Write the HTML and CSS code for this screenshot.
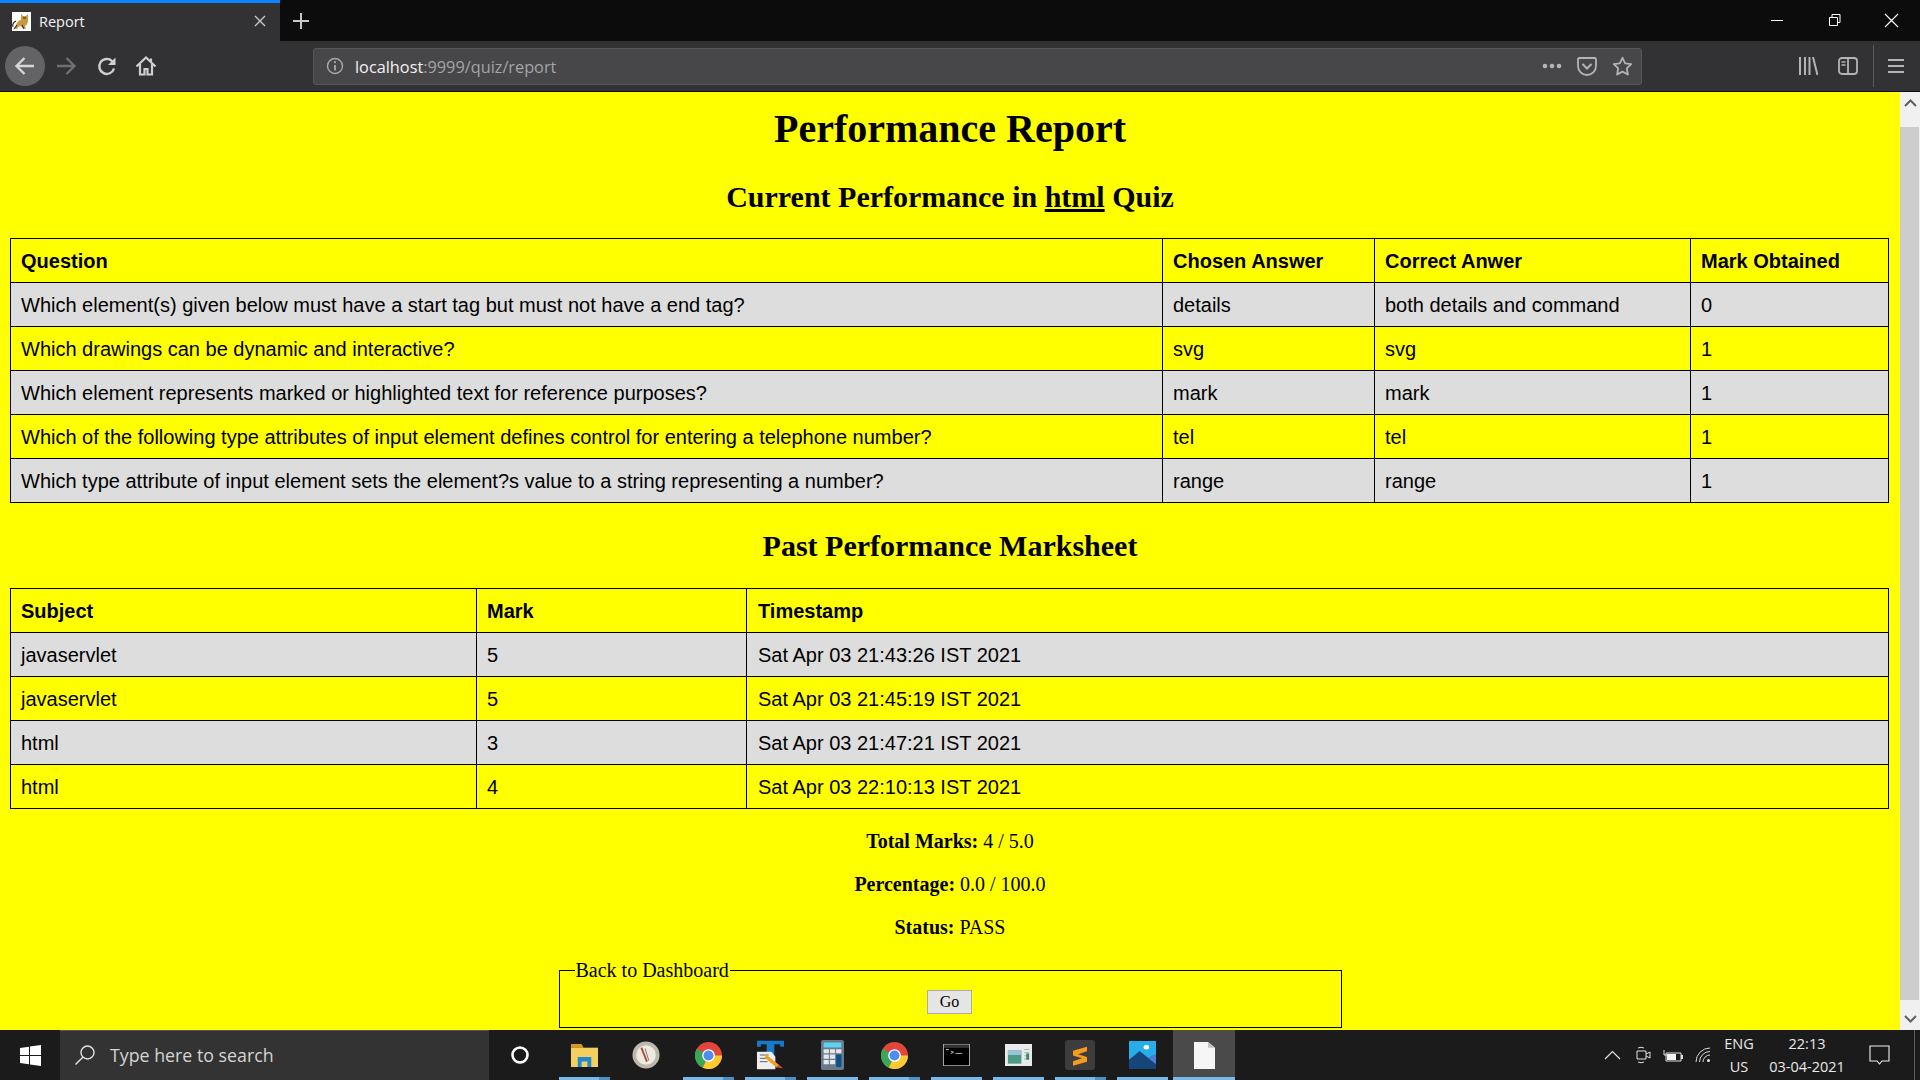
FILE: index.html
```html
<!DOCTYPE html>
<html>
<head>
<meta charset="UTF-8">
<title>Report</title>
<link rel="stylesheet" href="styles.css">
</head>
<body>

<!-- browser tabs -->
<div class="tabbar">
  <div class="tab">
    <svg class="favicon" width="19" height="19" viewBox="0 0 19 19"><rect width="19" height="19" fill="#fff"/><path d="M4 13C5 10 7 8 9 8L9 2l2 2 3 0 2-2 0 6c0 3-1 5-3 6l1 3-3-1-2-2-3 1-1 2-2 0z" fill="#c9993f"/><path d="M11 6h3M1 15c-1-3 1-5 3-6M2 17l3-4M12 17l-2-4" stroke="#3a2c1c" stroke-width="1.100" fill="none"/></svg>
    <span class="tab-title">Report</span>
    <svg class="tab-close" width="12" height="12" viewBox="0 0 12 12"><path d="M1 1l10 10M11 1L1 11" stroke="#c8c8c8" stroke-width="1.400"/></svg>
  </div>
  <svg class="newtab" width="18" height="18" viewBox="0 0 18 18"><path d="M9 1v16M1 9h16" stroke="#c8c8c8" stroke-width="2"/></svg>
  <div class="winbtns">
    <svg width="15" height="15" viewBox="0 0 15 15"><path d="M1 7.500h12" stroke="#fff"/></svg>
    <svg width="15" height="15" viewBox="0 0 15 15"><path d="M2.500 4.500h8v8h-8zM5 4.500V1.500h8v8h-2.500" stroke="#fff" fill="none"/></svg>
    <svg width="15" height="15" viewBox="0 0 15 15"><path d="M1 1l13 13M14 1L1 14" stroke="#fff" stroke-width="1.100"/></svg>
  </div>
</div>

<!-- browser toolbar -->
<div class="toolbar">
  <div class="nav-left">
    <span class="backbtn"><svg width="22" height="22" viewBox="0 0 22 22"><path d="M2 11h18M10.500 3L2.500 11l8 8" stroke="#d6d6d6" stroke-width="2.400" fill="none"/></svg></span>
    <svg class="nav-fwd" width="22" height="22" viewBox="0 0 22 22"><path d="M2 11h18M11.500 3l8 8-8 8" stroke="#6f6f71" stroke-width="2.400" fill="none"/></svg>
    <svg class="nav-reload" width="22" height="22" viewBox="0 0 22 22"><path d="M18 13.500a7.500 7.500 0 1 1-2-7.500L18 8" stroke="#cfcfcf" stroke-width="2.400" fill="none"/><path d="M19.500 2.500v7.500h-7.500z" fill="#cfcfcf"/></svg>
    <svg class="nav-home" width="22" height="22" viewBox="0 0 22 22"><path d="M1.500 11.500L11 2.500l9.500 9M5 9v10.500h4.500v-5.500h3v5.500H17V9M16 3.500v3" stroke="#cfcfcf" stroke-width="2.200" fill="none"/></svg>
  </div>
  <div class="urlbar">
    <svg class="url-info" width="18" height="18" viewBox="0 0 18 18"><circle cx="9" cy="9" r="7.500" stroke="#a9a9ab" stroke-width="1.400" fill="none"/><path d="M9 8v5.500" stroke="#a9a9ab" stroke-width="1.800"/><circle cx="9" cy="5.200" r="1.100" fill="#a9a9ab"/></svg>
    <span class="url-text"><span class="url-host">localhost</span>:9999/quiz/report</span>
    <div class="url-actions">
      <svg width="20" height="6" viewBox="0 0 20 6"><circle cx="3" cy="3" r="2.300" fill="#b4b4b6"/><circle cx="10" cy="3" r="2.300" fill="#b4b4b6"/><circle cx="17" cy="3" r="2.300" fill="#b4b4b6"/></svg>
      <svg width="20" height="19" viewBox="0 0 20 19"><path d="M1 2.500Q1 1 2.500 1h15Q19 1 19 2.500V9a9 9 0 0 1-18 0z" stroke="#b4b4b6" stroke-width="1.800" fill="none"/><path d="M5.500 7l4.500 4.500L14.500 7" stroke="#b4b4b6" stroke-width="2" fill="none"/></svg>
      <svg width="21" height="20" viewBox="0 0 21 20"><path d="M10.500 1.800l2.700 5.600 6 .8-4.400 4.200 1.100 6.100-5.400-2.900-5.400 2.900 1.100-6.100-4.400-4.200 6-.8z" stroke="#b4b4b6" stroke-width="1.800" fill="none" stroke-linejoin="round"/></svg>
    </div>
  </div>
  <div class="nav-right">
    <svg width="20" height="18" viewBox="0 0 20 18"><path d="M2 0v18M7 0v18M11.500 0v18M15 0l4.500 18" stroke="#b4b4b6" stroke-width="2"/></svg>
    <svg width="20" height="18" viewBox="0 0 20 18"><rect x="1" y="1" width="18" height="16" rx="3" stroke="#b4b4b6" stroke-width="1.800" fill="none"/><path d="M10 1v16" stroke="#b4b4b6" stroke-width="1.800"/><path d="M3.500 5h4M3.500 8h4" stroke="#b4b4b6" stroke-width="1.400"/></svg>
    <span class="nav-sep"></span>
    <svg width="16" height="16" viewBox="0 0 16 16"><path d="M0 2h16M0 8h16M0 14h16" stroke="#b4b4b6" stroke-width="2"/></svg>
  </div>
</div>

<div class="viewport">
  <div class="page">
    <h1>Performance Report</h1>
    <h2>Current Performance in <u>html</u> Quiz</h2>
    <table class="current">
      <tr><th class="c-q">Question</th><th class="c-chosen">Chosen Answer</th><th class="c-correct">Correct Anwer</th><th>Mark Obtained</th></tr>
      <tr><td>Which element(s) given below must have a start tag but must not have a end tag?</td><td>details</td><td>both details and command</td><td>0</td></tr>
      <tr><td>Which drawings can be dynamic and interactive?</td><td>svg</td><td>svg</td><td>1</td></tr>
      <tr><td>Which element represents marked or highlighted text for reference purposes?</td><td>mark</td><td>mark</td><td>1</td></tr>
      <tr><td>Which of the following type attributes of input element defines control for entering a telephone number?</td><td>tel</td><td>tel</td><td>1</td></tr>
      <tr><td>Which type attribute of input element sets the element?s value to a string representing a number?</td><td>range</td><td>range</td><td>1</td></tr>
    </table>
    <h2 class="past">Past Performance Marksheet</h2>
    <table class="history">
      <tr><th class="c-subject">Subject</th><th class="c-mark">Mark</th><th>Timestamp</th></tr>
      <tr><td>javaservlet</td><td>5</td><td>Sat Apr 03 21:43:26 IST 2021</td></tr>
      <tr><td>javaservlet</td><td>5</td><td>Sat Apr 03 21:45:19 IST 2021</td></tr>
      <tr><td>html</td><td>3</td><td>Sat Apr 03 21:47:21 IST 2021</td></tr>
      <tr><td>html</td><td>4</td><td>Sat Apr 03 22:10:13 IST 2021</td></tr>
    </table>
    <p class="summary first"><b>Total Marks:</b> 4 / 5.0</p>
    <p class="summary"><b>Percentage:</b> 0.0 / 100.0</p>
    <p class="summary"><b>Status:</b> PASS</p>
    <fieldset class="back">
      <legend>Back to Dashboard</legend>
      <button type="button">Go</button>
    </fieldset>
  </div>
  <div class="scrollbar">
    <div class="sb-up"><svg width="13" height="8" viewBox="0 0 13 8"><path d="M1 7l5.500-5.500L12 7" stroke="#606060" stroke-width="2" fill="none"/></svg></div>
    <div class="sb-thumb"></div>
    <div class="sb-down"><svg width="13" height="8" viewBox="0 0 13 8"><path d="M1 1l5.500 5.500L12 1" stroke="#606060" stroke-width="2" fill="none"/></svg></div>
  </div>
</div>

<!-- windows taskbar -->
<div class="taskbar">
  <div class="startbtn"><svg width="21" height="21" viewBox="0 0 21 21"><path d="M0 3l9-1.300V10H0zM10 1.500L21 0v10H10zM0 11h9v8.300L0 18zM10 11h11v10l-11-1.500z" fill="#fff"/></svg></div>
  <div class="searchbox">
    <svg width="22" height="22" viewBox="0 0 22 22"><circle cx="13.500" cy="8.500" r="6.500" stroke="#e4e4e4" stroke-width="1.400" fill="none"/><path d="M8.800 13.200L1.500 20.500" stroke="#e4e4e4" stroke-width="1.400"/></svg>
    <span>Type here to search</span>
  </div>
  <div class="cortana"><svg width="18" height="18" viewBox="0 0 18 18"><circle cx="9" cy="9" r="7.500" stroke="#fff" stroke-width="2.600" fill="none"/></svg></div>
  <div class="apps">
    <div class="app run stack"><svg width="27" height="23" viewBox="0 3 28 25" preserveAspectRatio="none"><path d="M0 3h11l2 4H0z" fill="#d89a1a"/><path d="M0 7h28v21H0z" fill="#f5cf5e"/><path d="M7 28V17h14v11h-4v-6h-6v6z" fill="#1e88d2"/></svg></div>
    <div class="app"><svg width="28" height="28" viewBox="0 0 30 30"><circle cx="15" cy="15" r="14.500" fill="#bcb8ac"/><circle cx="15" cy="15" r="10.500" fill="#efeae0"/><path d="M10 7l6 15" stroke="#b8443a" stroke-width="2"/><path d="M14 8l4 13" stroke="#777" stroke-width="1"/></svg></div>
    <div class="app run stack"><svg width="27" height="27" viewBox="0 0 28 28"><use href="#chrome"/></svg></div>
    <div class="app run stack"><svg width="29" height="30" viewBox="0 0 30 36" preserveAspectRatio="none"><path d="M1 1h28v7h-4V5H19v26h-8V5H5v3H1z" fill="#1679c9"/><path d="M1 14h15l4 6v15H1z" fill="#eee"/><path d="M4 18h9M4 22h8M4 26h8" stroke="#555"/><path d="M11 18l13 12-3 3-12-12z" fill="#f0a020"/><path d="M21 33l3-3 4 4z" fill="#d44"/></svg></div>
    <div class="app run"><svg width="23" height="30" viewBox="0 0 22 36" preserveAspectRatio="none"><rect width="22" height="36" rx="2" fill="#6b7a88"/><rect x="2.500" y="3" width="17" height="6" fill="#5cd2f2"/><path d="M2.500 11h5v5h-5zM8.500 11h5v5h-5zM14.500 11h5v5h-5zM2.500 17.500h5v5h-5zM8.500 17.500h5v5h-5zM2.500 24h5v5h-5zM8.500 24h5v5h-5z" fill="#e4e8ec"/><rect x="14.500" y="17.500" width="5" height="15" fill="#0f4f8c"/></svg></div>
    <div class="app run stack"><svg width="27" height="27" viewBox="0 0 28 28"><use href="#chrome"/></svg></div>
    <div class="app run"><svg width="27" height="22" viewBox="0 0 28 28" preserveAspectRatio="none"><rect width="28" height="28" fill="#aaa"/><rect x="1" y="1" width="26" height="26" fill="#000"/><rect x="1" y="1" width="26" height="4" fill="#333"/><path d="M3 7h3M8 9l3 1.500-3 1.500M13 12h7" stroke="#ccc"/></svg></div>
    <div class="app run"><svg width="27" height="22" viewBox="0 0 28 28" preserveAspectRatio="none"><rect width="28" height="28" fill="#e8eaec"/><rect x="3" y="8" width="14" height="17" fill="#4f9a84"/><rect x="3" y="8" width="14" height="6" fill="#9cc4d8"/><path d="M20 7h5M20 11h5M20 15h5M20 19h5" stroke="#9aa"/><rect x="22" y="12" width="3" height="8" fill="#3a8a70"/></svg></div>
    <div class="app run stack"><svg width="30" height="30" viewBox="0 0 30 36" preserveAspectRatio="none"><rect width="30" height="36" rx="3" fill="#3d3d3d"/><path d="M22 8v5.500L13 17l9 3.500V26L8 31v-5.500l9-3.500-9-3.500V13z" fill="#f69b1d"/></svg></div>
    <div class="app run"><svg width="27" height="28" viewBox="0 0 28 36" preserveAspectRatio="none"><rect width="28" height="36" fill="#27aee8"/><path d="M0 36V24L11 13l9 9 8-5v19z" fill="#16457c"/><path d="M14 16l6 6 8-5v13z" fill="#4a80d0"/><circle cx="18" cy="8" r="2.800" fill="#fff"/></svg></div>
    <div class="app run active"><svg width="21" height="27" viewBox="0 0 21 33" preserveAspectRatio="none"><path d="M0 0h14l7 7v26H0z" fill="#f6f6f6"/><path d="M14 0l7 7h-7z" fill="#c4c4c4"/></svg></div>
  </div>
  <div class="tray">
    <svg width="17" height="10" viewBox="0 0 17 10"><path d="M1 9l7.500-7.500L16 9" stroke="#e2e2e2" stroke-width="1.200" fill="none"/></svg>
    <svg width="15" height="18" viewBox="0 0 15 18"><path d="M1 5h9v8H1zM10 8l4-2v6l-4-2M2 2q3-1.500 6 0M2 16q3 1.500 6 0" stroke="#e2e2e2" fill="none"/></svg>
    <svg width="21" height="13" viewBox="0 0 21 13"><path d="M4 4h15v8H4zM2 1v5h3" stroke="#e2e2e2" fill="none"/><rect x="5" y="5" width="9" height="6" fill="#f2f2f2"/><rect x="19" y="6" width="2" height="4" fill="#e2e2e2"/></svg>
    <svg width="16" height="16" viewBox="0 0 16 16"><path d="M1 15a14 14 0 0 1 14-14M4.500 15a10.500 10.500 0 0 1 10.500-10.500M8 15a7 7 0 0 1 7-7" stroke="#d8d8d8" fill="none"/><circle cx="13.500" cy="13.500" r="1.500" fill="#e8e8e8"/></svg>
    <div class="lang"><span>ENG</span><span>US</span></div>
    <div class="clock"><span>22:13</span><span>03-04-2021</span></div>
    <svg width="21" height="20" viewBox="0 0 21 20"><path d="M1 1h19v15h-7l-2.500 3L8 16H1z" stroke="#f0f0f0" stroke-width="1.100" fill="none"/></svg>
  </div>
  <span class="showdesk"></span>
</div>

<svg width="0" height="0" class="defs"><defs><g id="chrome"><circle cx="14" cy="14" r="14" fill="#e2463a"/><path d="M14 14L1.800 7A14 14 0 0 0 8 26.700z" fill="#3aa757"/><path d="M14 14L8 26.700A14 14 0 0 0 28 14z" fill="#fbcb2e"/><circle cx="14" cy="14" r="6.600" fill="#fff"/><circle cx="14" cy="14" r="5.200" fill="#4e8cf0"/></g></defs></svg>

</body>
</html>
```
FILE: styles.css
```css
html, body { margin: 0; padding: 0; height: 100%; overflow: hidden; }
body { display: flex; flex-direction: column; background: #ff0; font-family: "Liberation Serif", serif; }
.defs { position: absolute; }

/* tabs */
.tabbar { display: flex; align-items: center; height: 41px; background: #0c0c0d; flex: none; }
.tab { display: flex; align-items: center; width: 280px; height: 41px; box-sizing: border-box; border-top: 3px solid #0a84ff; background: #323234; padding: 0 14px 2px 12px; }
.tab-title { flex: 1; margin-left: 8px; font: 14.500px "Open Sans", sans-serif; color: #f5f5f5; }
.newtab { margin-left: 12px; }
.winbtns { margin-left: auto; display: flex; gap: 42px; padding-right: 21px; }

/* toolbar */
.toolbar { display: flex; align-items: center; height: 50px; background: #323234; border-bottom: 1px solid #0c0c0d; flex: none; }
.nav-left { display: flex; align-items: center; width: 313px; padding-left: 5px; box-sizing: border-box; }
.backbtn { display: flex; align-items: center; justify-content: center; width: 40px; height: 40px; border-radius: 50%; background: #636365; }
.nav-fwd { margin-left: 10px; }
.nav-reload { margin-left: 19px; }
.nav-home { margin-left: 17px; }
.urlbar { display: flex; align-items: center; width: 1329px; height: 37px; box-sizing: border-box; background: #474749; border: 1px solid #575759; border-radius: 3px; padding: 0 8px 0 12px; }
.url-text { margin-left: 11px; padding-top: 2px; font: 16.300px "Open Sans", sans-serif; color: #a4a4a6; }
.url-host { color: #f2f2f2; }
.url-actions { margin-left: auto; display: flex; align-items: center; gap: 15px; padding-left: 1px; }
.nav-right { flex: 1; display: flex; align-items: center; gap: 20px; padding-left: 156px; box-sizing: border-box; white-space: nowrap; }
.nav-sep { width: 1px; height: 42px; background: #5a5a5c; margin: 0 -6px 0 -5px; }

/* page */
.viewport { flex: 1; display: flex; min-height: 0; background: #ff0; }
.page { flex: 1; min-width: 0; overflow: hidden; padding: 0 10px; box-sizing: border-box; font-size: 20px; color: #000; }
h1 { margin: 14px 0 0; font-size: 40px; line-height: 46px; text-align: center; }
h2 { margin: 28px 0 0; font-size: 30px; line-height: 34px; text-align: center; }
h2.past { margin: 26px 0 0; }
table { border-collapse: collapse; width: 1879px; table-layout: fixed; margin-top: 24px; font: 20px "Liberation Sans", sans-serif; }
.history { margin-top: 25px; }
th, td { border: 1.500px solid #000; height: 44px; padding: 2px 10px 0; text-align: left; box-sizing: border-box; }
.history th:nth-child(3), .history td:nth-child(3) { padding-left: 11px; }
tr:nth-child(even) td { background: #ddd; }
.c-q { width: 1152px; }
.c-chosen { width: 212px; }
.c-correct { width: 316px; }
.c-subject { width: 466px; }
.c-mark { width: 270px; }
.summary { margin: 20px 0; line-height: 23px; text-align: center; }
.summary.first { margin-top: 21px; }
.back { display: block; width: 783px; height: 69px; box-sizing: border-box; margin: 0 auto; padding: 0; border: 1.500px solid #000; text-align: center; }
.back legend { margin-left: 15px; padding: 0 1px; text-align: left; line-height: 23px; }
.back button { margin: 8px 1px 0 0; width: 45px; height: 24px; padding: 0; font: 16px "Liberation Serif", serif; background: #e5e5e5; border: 1.500px solid #adadad; color: #000; }

/* scrollbar */
.scrollbar { width: 20px; flex: none; background: #f0f0f0; display: flex; flex-direction: column; align-items: center; }
.sb-up, .sb-down { flex: none; display: flex; justify-content: center; width: 100%; }
.sb-up { height: 35px; padding-top: 7px; box-sizing: border-box; }
.sb-down { height: 30px; padding-top: 15px; box-sizing: border-box; }
.sb-thumb { width: 19px; margin-right: 1px; flex: 1; background: #cdcdcd; }

/* taskbar */
.taskbar { display: flex; align-items: center; height: 50px; background: #1b1b1b; flex: none; position: relative; }
.startbtn { display: flex; justify-content: center; width: 60px; }
.searchbox { display: flex; align-items: center; width: 429px; height: 50px; box-sizing: border-box; background: #333; border-top: 1px solid #555; padding: 0 0 2px 14px; font: 17.800px "Open Sans", sans-serif; color: #d4d4d4; gap: 14px; }
.cortana { display: flex; justify-content: center; width: 62px; }
.apps { display: flex; margin-left: 2px; }
.app { display: flex; align-items: center; justify-content: center; width: 62px; height: 50px; box-sizing: border-box; position: relative; }
.run::after { content: ""; position: absolute; left: 6px; right: 5px; bottom: 0; height: 3px; background: #76b9ed; }
.stack::before { content: ""; position: absolute; right: 5px; width: 11px; bottom: 0; height: 3px; background: #4e8fc4; z-index: 1; }
.active { background: #4a4a4a; }
.active::after { left: 0; right: 0; }
.tray { margin-left: auto; display: grid; grid-template-columns: 30px 32px 26px 36px 36px 100px 44px; justify-items: center; align-items: center; padding-right: 19px; color: #e8e8e8; font: 14.500px "Open Sans", sans-serif; }
.lang, .clock { display: flex; flex-direction: column; align-items: center; line-height: 23px; }
.showdesk { position: absolute; right: 5px; top: 0; width: 1px; height: 50px; background: #5a5a5a; }
```
